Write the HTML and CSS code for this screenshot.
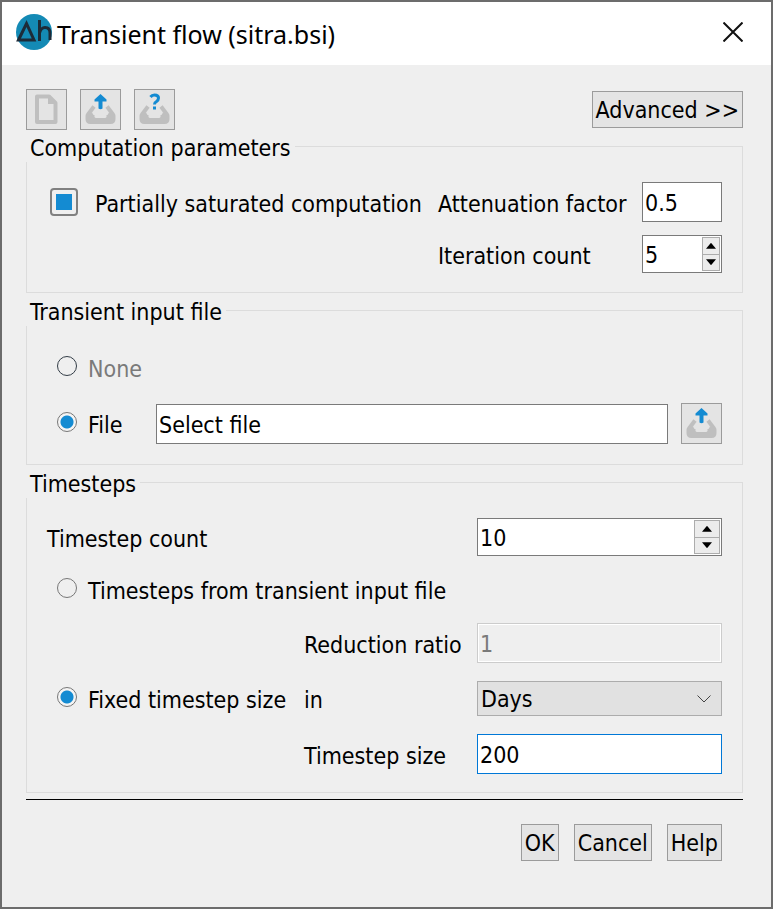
FILE: index.html
```html
<!DOCTYPE html>
<html lang="en">
<head>
<meta charset="utf-8">
<title>Transient flow (sitra.bsi)</title>
<link rel="stylesheet" href="styles.css">
</head>
<body>
<svg class="defs" aria-hidden="true">
  <symbol id="tray" viewBox="0 0 39 39">
    <path class="icon-grey-line" d="M13 16.500L7 24.500M26 16.500L32 24.500"/>
    <path class="icon-grey" d="M4.500 26Q4.500 23 7 22.500H11L12.500 25H13.500V27Q14 28 15 28H24Q25 28 25.500 27V25H26.500L28 22.500H32Q34.500 23 34.500 26V29Q34.500 34 29.500 34H9.500Q4.500 34 4.500 29Z"/>
  </symbol>
  <symbol id="arrow" viewBox="0 0 39 39">
    <path class="icon-blue" d="M19.500 4L25.500 9.500V11.500H21.500V18.500Q19.500 20 17.500 18.500V11.500H13.500V9.500Z"/>
  </symbol>
</svg>
<main class="dialog">
  <header class="titlebar">
    <svg class="logo" viewBox="0 0 36 36" aria-hidden="true">
      <circle class="logo-disc" cx="18" cy="18" r="18"/>
      <path class="logo-mark" d="M2.500 26L10.500 9.500L18 26ZM23.500 6V27M23.500 19Q25 13.500 29 13.500Q34 13.500 34 19V26"/>
    </svg>
    <h1 class="title">Transient flow (sitra.bsi)</h1>
    <button class="close" type="button" aria-label="Close">
      <svg class="close-icon" viewBox="0 0 20 20" aria-hidden="true"><path d="M.5.500L19.500 19.500M19.500.500L.5 19.500"/></svg>
    </button>
  </header>
  <form class="content">
    <div class="toolbar">
      <button class="button tool" type="button" aria-label="New">
        <svg class="tool-icon" viewBox="0 0 39 39" aria-hidden="true"><path class="icon-page" d="M10 6.500H22L28.500 13V32H10Z"/><path class="icon-grey" d="M21 6V14H29Z"/></svg>
      </button>
      <button class="button tool" type="button" aria-label="Open">
        <svg class="tool-icon" viewBox="0 0 39 39" aria-hidden="true"><use href="#tray"/><use href="#arrow"/></svg>
      </button>
      <button class="button tool" type="button" aria-label="Info">
        <svg class="tool-icon" viewBox="0 0 39 39" aria-hidden="true"><use href="#tray"/><path class="icon-blue-line" d="M15.500 7Q17 5 19.500 5Q23.500 5 23.500 8Q23.500 10 21.500 11.500Q19.500 12.500 19.500 14.500M19.500 16.500V19.500"/></svg>
      </button>
      <button class="button advanced" type="button">Advanced &gt;&gt;</button>
    </div>

    <fieldset class="group">
      <legend class="legend">Computation parameters</legend>
      <div class="grid computation">
        <label class="choice check-choice"><input class="check" type="checkbox" checked>Partially saturated computation</label>
        <label class="label" for="attenuation">Attenuation factor</label>
        <input class="field" id="attenuation" type="text" value="0.5">
        <label class="label second" for="iterations">Iteration count</label>
        <div class="spinner">
          <input class="spin-value" id="iterations" type="text" value="5">
          <div class="spin-buttons">
            <button class="spin" type="button" aria-label="Increase iterations"><span class="up"></span></button>
            <button class="spin" type="button" aria-label="Decrease iterations"><span class="down"></span></button>
          </div>
        </div>
      </div>
    </fieldset>

    <fieldset class="group">
      <legend class="legend">Transient input file</legend>
      <div class="source">
        <label class="choice muted"><input class="radio dark" type="radio" name="source">None</label>
        <div class="file-row">
          <label class="choice file-choice"><input class="radio" type="radio" name="source" checked>File</label>
          <input class="field" type="text" value="Select file" aria-label="Input file">
          <button class="button tool" type="button" aria-label="Browse">
            <svg class="tool-icon" viewBox="0 0 39 39" aria-hidden="true"><use href="#tray"/><use href="#arrow"/></svg>
          </button>
        </div>
      </div>
    </fieldset>

    <fieldset class="group">
      <legend class="legend">Timesteps</legend>
      <div class="grid timesteps">
        <label class="label wide" for="count">Timestep count</label>
        <div class="spinner">
          <input class="spin-value" id="count" type="text" value="10">
          <div class="spin-buttons roomy">
            <button class="spin" type="button" aria-label="Increase count"><span class="up"></span></button>
            <button class="spin" type="button" aria-label="Decrease count"><span class="down"></span></button>
          </div>
        </div>
        <label class="choice full"><input class="radio" type="radio" name="steps">Timesteps from transient input file</label>
        <label class="label second" for="ratio">Reduction ratio</label>
        <input class="field" id="ratio" type="text" value="1" disabled>
        <label class="choice"><input class="radio" type="radio" name="steps" checked>Fixed timestep size</label>
        <label class="label" for="unit">in</label>
        <div class="select-wrap">
          <select class="select" id="unit"><option>Days</option></select>
          <svg class="chevron" viewBox="0 0 14 8" aria-hidden="true"><path d="M.5.500L7 7L13.500.500"/></svg>
        </div>
        <label class="label second" for="size">Timestep size</label>
        <input class="field active" id="size" type="text" value="200">
      </div>
    </fieldset>

    <footer class="footer">
      <button class="button" type="button">OK</button>
      <button class="button" type="button">Cancel</button>
      <button class="button" type="button">Help</button>
    </footer>
  </form>
</main>
</body>
</html>
```
FILE: styles.css
```css
* { box-sizing: border-box; }

body {
  margin: 0;
  min-height: 100vh;
  display: flex;
  background: #6c6c6c;
  color: #000;
  font: 23px/28px "DejaVu Sans Condensed", "Noto Sans", sans-serif;
}

input, button, select { font: inherit; color: inherit; margin: 0; }

.defs { position: absolute; width: 0; height: 0; }

.dialog {
  flex: 1;
  min-width: 0;
  margin: 2px;
  background: #efefef;
  display: flex;
  flex-direction: column;
}

.titlebar {
  height: 63px;
  padding: 0 28px 4px 14px;
  display: flex;
  align-items: center;
  gap: 5px;
  background: #fff;
}
.logo { width: 36px; height: 36px; }
.logo-disc { fill: #148ab5; }
.logo-mark { fill: none; stroke: #1d2b38; stroke-width: 3; }
.title {
  flex: 1;
  margin: 0;
  padding-top: 4px;
  font: 25px/36px "Noto Sans", "Open Sans", sans-serif;
}
.close { width: 20px; height: 20px; padding: 0; border: 0; background: none; display: flex; }
.close-icon { width: 20px; height: 20px; fill: none; stroke: #111; stroke-width: 2; }

.content { padding: 24px 28px 20px 24px; }

.toolbar { display: flex; align-items: center; gap: 13px; }

.button {
  height: 37px;
  padding: 1px 3px 0;
  border: 1px solid #9b9b9b;
  background: #e4e4e4;
}
.tool { flex: none; width: 41px; height: 41px; padding: 0; display: flex; }
.tool-icon { width: 39px; height: 39px; }
.advanced { margin-left: auto; }

.icon-grey { fill: #bfbfbf; }
.icon-grey-line { fill: none; stroke: #bfbfbf; stroke-width: 4; }
.icon-page { fill: none; stroke: #bfbfbf; stroke-width: 4; stroke-linejoin: round; }
.icon-blue { fill: #148bd2; }
.icon-blue-line { fill: none; stroke: #148bd2; stroke-width: 3; }

.group {
  min-width: 0;
  margin: 0 0 1px;
  padding: 0;
  border: 1px solid #dcdcdc;
}
.legend {
  height: 32px;
  margin-left: -1px;
  padding: 4px 4px 0;
  background: #efefef;
}

.grid { display: grid; align-items: center; white-space: nowrap; }
.computation {
  grid-template-columns: minmax(0, 1fr) 191px 80px;
  gap: 13px;
  padding: 20px 20px 19px 23px;
}
.timesteps {
  grid-template-columns: 244px 160px minmax(0, 1fr);
  gap: 18px 13px;
  padding: 20px 20px 18px;
}
.second { grid-column: 2; }
.wide { grid-column: 1 / 3; }
.full { grid-column: 1 / 4; }

.label { padding-top: 3px; }
.choice {
  padding-top: 3px;
  display: flex;
  align-items: center;
  gap: 11px;
  white-space: nowrap;
}
.timesteps .choice { padding-left: 10px; }
.check-choice { gap: 17px; }
.muted { color: #7a7a7a; }

.check {
  appearance: none;
  flex: none;
  width: 28px;
  height: 28px;
  margin-bottom: 4px;
  border: 2px solid #808080;
  border-radius: 4px;
  background: #f4f4f4;
}
.check:checked { background: #148bd2 content-box; padding: 4px; }

.radio {
  appearance: none;
  flex: none;
  width: 20px;
  height: 20px;
  margin-bottom: 6px;
  border: 1px solid #777;
  border-radius: 50%;
}
.radio.dark { border-color: #333d47; }
.radio:checked { background: radial-gradient(circle, #148bd2 6px, #f4f4f4 7px); }

.source { padding: 26px 20px 20px 30px; display: grid; gap: 20px; }
.file-row { display: flex; align-items: center; gap: 13px; }
.file-choice { flex: none; width: 86px; }

.field {
  width: 100%;
  min-width: 0;
  height: 40px;
  padding: 2px 2px 0;
  border: 1px solid #7a7a7a;
  border-radius: 0;
  background: #fff;
}
.field:disabled {
  border-color: #ccc;
  background: #efefef;
  box-shadow: inset 0 0 0 1px #fff;
  color: #7a7a7a;
}
.active { border-color: #0078d7; }

.spinner {
  height: 38px;
  padding: 1px;
  border: 1px solid #7a7a7a;
  background: #fff;
  display: flex;
}
.spin-value { flex: 1; min-width: 0; width: 0; padding: 2px 1px 0; border: 0; background: none; }
.spin-buttons { width: 18px; display: grid; border: 1px solid #acacac; }
.roomy { width: 26px; }
.spin { display: grid; place-items: center; padding: 0; border: 0; background: #ececec; }
.spin + .spin { border-top: 1px solid #acacac; }
.up, .down { width: 10px; height: 6px; background: #000; clip-path: polygon(50% 0, 100% 100%, 0 100%); }
.down { clip-path: polygon(0 0, 100% 0, 50% 100%); }

.select-wrap { display: grid; align-items: center; }
.select-wrap > * { grid-area: 1 / 1; }
.select {
  appearance: none;
  height: 35px;
  padding: 1px 3px 0;
  border: 1px solid #acacac;
  border-radius: 0;
  background: #e1e1e1;
}
.chevron {
  width: 14px;
  height: 8px;
  margin-right: 11px;
  justify-self: end;
  pointer-events: none;
  fill: none;
  stroke: #444;
}

.footer {
  margin-top: 6px;
  padding: 24px 21px 0 0;
  border-top: 1px solid #000;
  display: flex;
  justify-content: flex-end;
  gap: 15px;
}
```
